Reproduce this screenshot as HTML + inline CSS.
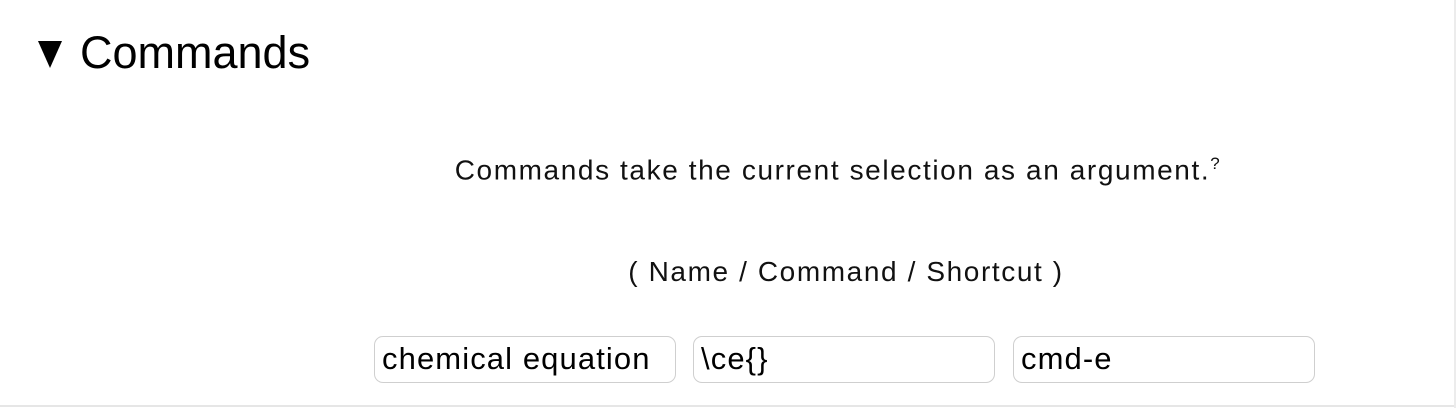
<!DOCTYPE html>
<html><head><style>
body{margin:0;width:1456px;height:408px;background:#fff;font-family:"Liberation Sans",sans-serif;position:relative;overflow:hidden;color:#111}
.b{position:absolute;left:0;top:405px;width:1456px;height:2px;background:#e6e6e6}
.r{position:absolute;left:1454px;top:0;width:2px;height:408px;background:#ececec}
h1{position:absolute;left:38px;top:26px;margin:0;font-weight:normal;font-size:45px;line-height:54px;color:#000}
.tri{display:inline-block;width:0;height:0;border-left:12px solid transparent;border-right:12px solid transparent;border-top:27px solid #000;margin-right:18px;vertical-align:0px}
.t{position:absolute;left:0;width:1676px;text-align:center;font-size:28px;letter-spacing:1.6px}
.in{position:absolute;top:336px;border:1.5px solid #cfcfcf;border-radius:9px;font-size:31px;letter-spacing:1.1px;line-height:44px;padding-left:7px;box-sizing:border-box;width:302px;height:47px;color:#000}
</style></head><body>
<h1><span class="tri"></span>Commands</h1>
<div class="t" style="top:154px">Commands take the current selection as an argument.<sup style="font-size:17px">?</sup></div>
<div class="t" style="top:256px;left:8px">( Name / Command / Shortcut )</div>
<div class="in" style="left:374px">chemical equation</div>
<div class="in" style="left:693px">\ce{}</div>
<div class="in" style="left:1013px">cmd-e</div>
<div class="b"></div><div class="r"></div>
</body></html>
